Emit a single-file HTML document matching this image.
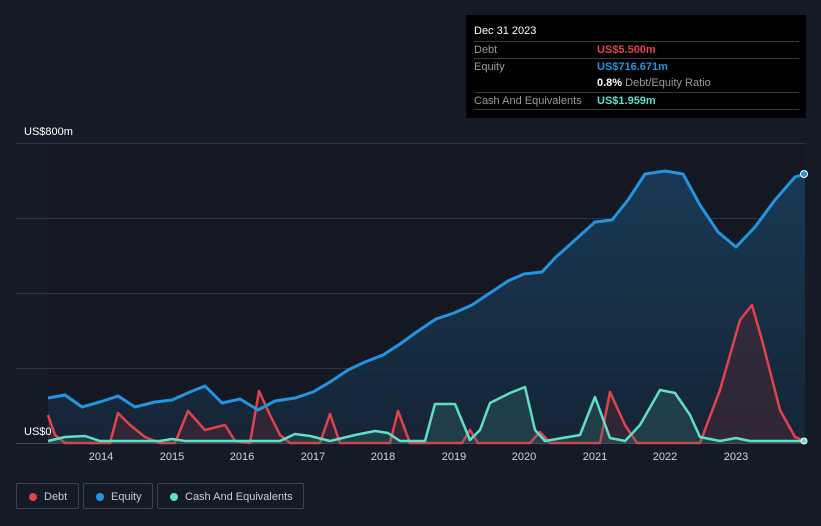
<!DOCTYPE html>
<html><head><style>
body{margin:0;width:821px;height:526px;background:#151b26;font-family:"Liberation Sans",sans-serif;overflow:hidden;position:relative}
.tip{position:absolute;left:466px;top:15px;width:340px;height:103px;background:#000;}
.tip .h{position:absolute;left:8px;top:10px;color:#fff;font-size:11px}
.row{position:absolute;left:8px;width:325px;border-top:1px solid #3a3a3a;height:17px;font-size:11px;color:#9a9a9a;line-height:17px}
.row span{position:absolute;left:123px;font-weight:bold}
.leg{position:absolute;top:483px;height:26px;border:1px solid #3c4350;border-radius:2px;color:#c8ccd2;font-size:11px;line-height:26px;box-sizing:border-box;padding-left:27px}
.leg i{position:absolute;left:12px;top:9px;width:8px;height:8px;border-radius:50%}
</style></head><body>
<svg width="821" height="526" style="position:absolute;left:0;top:0">
<defs><linearGradient id="g" x1="0" y1="0" x2="0" y2="1"><stop offset="0" stop-color="#1a3d5c" stop-opacity=".9"/><stop offset="1" stop-color="#16283b" stop-opacity=".8"/></linearGradient></defs>
<rect x="48" y="143" width="757" height="300" fill="#131822"/>
<g stroke="#2f3540" stroke-width="1">
<line x1="16" y1="143.5" x2="805" y2="143.5"/><line x1="16" y1="218.5" x2="805" y2="218.5"/><line x1="16" y1="293.5" x2="805" y2="293.5"/><line x1="16" y1="368.5" x2="805" y2="368.5"/><line x1="16" y1="443.5" x2="805" y2="443.5" stroke="#444b57"/></g>
<polygon fill="url(#g)" points="48,443 48,398 65,395 82,407 100,402 118,396 135,407 155,402 172,400 190,392 205,386 222,403 240,399 258,410 275,401 295,398 313,392 330,382 348,370 365,362 383,355 400,344 418,331 436,319 454,313 472,305 490,293 508,281 524,274 542,272 555,258 575,240 595,222 612,220 628,200 645,174 665,171 683,174 700,205 718,232 736,247 755,227 775,200 795,177 805,174 805,443"/>
<polygon fill="rgba(80,40,50,.45)" points="48,443 48,415 55,435 65,443 110,443 118,413 130,425 145,437 160,443 175,443 188,411 205,430 225,425 235,441 250,443 259,391 270,415 280,435 290,443 320,443 330,414 340,443 390,443 398,411 410,443 462,443 470,430 478,443 530,443 540,432 550,443 600,443 610,392 625,425 637,443 700,443 720,390 740,320 752,305 762,340 780,410 795,437 805,441 805,443"/>
<polyline fill="none" stroke="#e0434e" stroke-width="2.5" stroke-linejoin="round" points="48,415 55,435 65,443 110,443 118,413 130,425 145,437 160,443 175,443 188,411 205,430 225,425 235,441 250,443 259,391 270,415 280,435 290,443 320,443 330,414 340,443 390,443 398,411 410,443 462,443 470,430 478,443 530,443 540,432 550,443 600,443 610,392 625,425 637,443 700,443 720,390 740,320 752,305 762,340 780,410 795,437 805,441"/>
<polygon fill="rgba(60,120,110,.3)" points="48,443 48,441 65,437 85,436 100,441 160,441 172,439 185,441 280,441 295,434 310,436 330,441 355,435 375,431 388,433 400,441 425,441 435,404 455,404 470,440 480,430 490,403 510,393 525,387 535,430 545,441 580,435 595,397 610,438 625,441 640,425 660,390 675,393 690,415 700,437 720,441 736,438 750,441 805,441 805,443"/>
<polyline fill="none" stroke="#5ee0c8" stroke-width="2.5" stroke-linejoin="round" points="48,441 65,437 85,436 100,441 160,441 172,439 185,441 280,441 295,434 310,436 330,441 355,435 375,431 388,433 400,441 425,441 435,404 455,404 470,440 480,430 490,403 510,393 525,387 535,430 545,441 580,435 595,397 610,438 625,441 640,425 660,390 675,393 690,415 700,437 720,441 736,438 750,441 805,441"/>
<polyline fill="none" stroke="#2394e0" stroke-width="3" stroke-linejoin="round" points="48,398 65,395 82,407 100,402 118,396 135,407 155,402 172,400 190,392 205,386 222,403 240,399 258,410 275,401 295,398 313,392 330,382 348,370 365,362 383,355 400,344 418,331 436,319 454,313 472,305 490,293 508,281 524,274 542,272 555,258 575,240 595,222 612,220 628,200 645,174 665,171 683,174 700,205 718,232 736,247 755,227 775,200 795,177 805,174"/>
<circle cx="804" cy="174" r="3.5" fill="#2394e0" stroke="#fff" stroke-width="1"/>
<circle cx="804" cy="441" r="3" fill="#5ee0c8" stroke="#fff" stroke-width="1"/>
<g fill="#fff" font-size="11" font-family="Liberation Sans,sans-serif">
<text x="24" y="135">US$800m</text><text x="24" y="435">US$0</text>
<g text-anchor="middle" fill="#d0d4da"><text x="101" y="460">2014</text><text x="172" y="460">2015</text><text x="242" y="460">2016</text><text x="313" y="460">2017</text><text x="383" y="460">2018</text><text x="454" y="460">2019</text><text x="524" y="460">2020</text><text x="595" y="460">2021</text><text x="665" y="460">2022</text><text x="736" y="460">2023</text></g></g>
</svg>
<div class="tip"><div class="h">Dec 31 2023</div>
<div class="row" style="top:26px">Debt<span style="color:#e0434e">US$5.500m</span></div>
<div class="row" style="top:43px">Equity<span style="color:#2394e0">US$716.671m</span></div>
<div class="row" style="top:60px;border-top:none"><span style="color:#fff">0.8% <b style="color:#9a9a9a;font-weight:normal">Debt/Equity Ratio</b></span></div>
<div class="row" style="top:77px">Cash And Equivalents<span style="color:#5ee0c8">US$1.959m</span></div>
<div class="row" style="top:94px;height:0"></div></div>
<div class="leg" style="left:16px;width:63px"><i style="background:#e0434e"></i>Debt</div>
<div class="leg" style="left:83px;width:70px"><i style="background:#2394e0"></i>Equity</div>
<div class="leg" style="left:157px;width:147px"><i style="background:#5ee0c8"></i>Cash And Equivalents</div>
</body></html>
